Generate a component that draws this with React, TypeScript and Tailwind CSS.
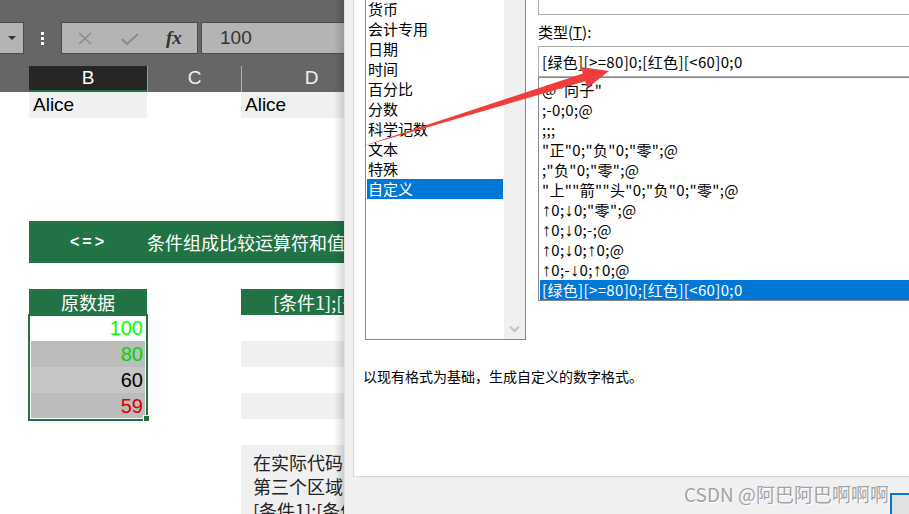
import React from "react";

const cjk = "font-['Noto_Sans_CJK_SC',sans-serif]";
const sheet = "font-['Liberation_Sans','Noto_Sans_CJK_SC',sans-serif]";

const categories = ["货币", "会计专用", "日期", "时间", "百分比", "分数", "科学记数", "文本", "特殊", "自定义"];

const formats = [
  '@"向子"',
  ";-0;0;@",
  ";;;",
  '"正"0;"负"0;"零";@',
  ';"负"0;"零";@',
  '"上""箭""头"0;"负"0;"零";@',
  '↑0;↓0;"零";@',
  "↑0;↓0;-;@",
  "↑0;↓0;↑0;@",
  "↑0;-↓0;↑0;@",
  "[绿色][>=80]0;[红色][<60]0;0",
];

// 箭头用窄字形，其余走思源黑体
function FormatText({ text }: { text: string }) {
  return (
    <>
      {text.split(/([↑↓])/).map((part, i) =>
        part === "↑" || part === "↓" ? (
          <span key={i} className="font-['Liberation_Sans',sans-serif] text-[18px] leading-none">
            {part}
          </span>
        ) : (
          <React.Fragment key={i}>{part}</React.Fragment>
        )
      )}
    </>
  );
}

function FormulaBar() {
  return (
    <div className="flex h-[66px] shrink-0 items-start bg-[#666666] pt-[22px]">
      <div className="flex h-[32px] w-[24px] shrink-0 items-center justify-center border border-l-0 border-[#4a4a4a] bg-[#b4b4b4]">
        <div className="h-0 w-0 border-x-[4px] border-t-[4px] border-x-transparent border-t-[#333]" />
      </div>
      <div className="flex w-[37px] shrink-0 flex-col items-center gap-[2px] pt-[10px]">
        <div className="h-[3px] w-[3px] bg-white" />
        <div className="h-[3px] w-[3px] bg-white" />
        <div className="h-[3px] w-[3px] bg-white" />
      </div>
      <div className="relative h-[32px] w-[137px] shrink-0 border border-[#4a4a4a] bg-[#b4b4b4]">
        <svg className="absolute left-[15px] top-[9px]" width="16" height="13" viewBox="0 0 16 13">
          <path d="M2 1 L14 12 M14 1 L2 12" stroke="#8a8a8a" strokeWidth="1.6" fill="none" />
        </svg>
        <svg className="absolute left-[58px] top-[9px]" width="20" height="14" viewBox="0 0 20 14">
          <path d="M2 7 L7 12 L18 2" stroke="#8a8a8a" strokeWidth="2" fill="none" />
        </svg>
        <span className="absolute left-[104px] top-[2px] font-['Liberation_Serif',serif] text-[19px] font-bold italic leading-[26px] text-[#333]">
          fx
        </span>
      </div>
      <div className={`ml-[3px] h-[32px] flex-1 border border-r-0 border-[#4a4a4a] bg-[#b4b4b4] pl-[18px] text-[19px] leading-[30px] text-[#333] ${sheet}`}>
        100
      </div>
    </div>
  );
}

function ColumnHeaders() {
  return (
    <div className={`flex h-[26px] shrink-0 bg-[#666666] text-[19px] leading-[24px] ${sheet}`}>
      <div className="w-[29px] shrink-0" />
      <div className="w-[118px] shrink-0 border-b-2 border-[#217346] bg-[#262626] text-center text-white">B</div>
      <div className="w-[94px] shrink-0 border-l border-[#9a9a9a] text-center text-[#f2f2f2]">C</div>
      <div className="w-[140px] shrink-0 border-l border-[#b0b0b0] text-center text-[#f2f2f2]">D</div>
    </div>
  );
}

function SheetBody() {
  return (
    <div className={`relative flex-1 bg-white ${sheet}`}>
      {/* 第1行 */}
      <div className="flex h-[26px] text-[19px] leading-[26px] text-black">
        <div className="w-[29px] shrink-0" />
        <div className="w-[118px] shrink-0 bg-[#f0f0f0] pl-[4px]">Alice</div>
        <div className="w-[94px] shrink-0" />
        <div className="w-[140px] shrink-0 bg-[#f0f0f0] pl-[4px]">Alice</div>
      </div>
      <div className="h-[103px]" />

      {/* 标题条 */}
      <div className={`ml-[29px] flex h-[42px] w-[400px] items-center bg-[#217346] text-white ${cjk}`}>
        <span className="ml-[41px] font-['Liberation_Sans',sans-serif] text-[16px] font-bold tracking-[3px]">&lt;=&gt;</span>
        <span className="ml-[40px] whitespace-nowrap text-[18px]">条件组成比较运算符和值</span>
      </div>
      <div className="h-[26px]" />

      {/* 表头 */}
      <div className={`flex h-[26px] text-[18px] leading-[26px] text-white ${cjk}`}>
        <div className="w-[29px] shrink-0" />
        <div className="w-[118px] shrink-0 bg-[#217346] text-center">原数据</div>
        <div className="w-[94px] shrink-0" />
        <div className="w-[140px] shrink-0 whitespace-nowrap bg-[#217346] pl-[32px]">[条件1];[条件2]</div>
      </div>

      {[
        { v: "100", bg: "bg-white", color: "text-[#00ff00]", d: "bg-white" },
        { v: "80", bg: "bg-[#bcbcbc]", color: "text-[#00d400]", d: "bg-[#f0f0f0]" },
        { v: "60", bg: "bg-[#c6c6c6]", color: "text-black", d: "bg-white" },
        { v: "59", bg: "bg-[#bcbcbc]", color: "text-[#d40000]", d: "bg-[#f0f0f0]" },
      ].map((r) => (
        <div key={r.v} className="flex h-[26px] text-[20px] leading-[26px]">
          <div className="w-[29px] shrink-0" />
          <div className={`w-[118px] shrink-0 pr-[4px] text-right ${r.bg} ${r.color}`}>{r.v}</div>
          <div className="w-[94px] shrink-0" />
          <div className={`w-[140px] shrink-0 ${r.d}`} />
        </div>
      ))}
      <div className="h-[26px]" />

      {/* 说明文字 */}
      <div className="flex">
        <div className="w-[241px] shrink-0" />
        <div className={`h-[80px] w-[140px] shrink-0 overflow-hidden bg-[#f0f0f0] pl-[12px] pt-[5px] text-[18px] leading-[24px] text-[#222] ${cjk}`}>
          <div className="whitespace-nowrap">在实际代码中</div>
          <div className="whitespace-nowrap">第三个区域的</div>
          <div className="whitespace-nowrap">[条件1]:[条件2]</div>
        </div>
      </div>

      {/* 选区 */}
      <div className="absolute left-[28px] top-[222px] h-[107px] w-[120px] border-2 border-[#217346] shadow-[inset_0_0_0_1px_#fff]" />
      <div className="absolute left-[143px] top-[323px] h-[7px] w-[7px] border border-white bg-[#217346]" />
    </div>
  );
}

function Spreadsheet() {
  return (
    <div className="relative flex w-[344px] shrink-0 flex-col overflow-hidden">
      <FormulaBar />
      <ColumnHeaders />
      <SheetBody />
      <div className="absolute right-0 top-0 h-full w-[10px] bg-gradient-to-r from-transparent to-black/15" />
    </div>
  );
}

function FormatDialog() {
  return (
    <div className={`flex min-w-0 flex-1 flex-col bg-[#f0f0f0] text-black ${cjk}`}>
      <div className="ml-[8px] h-[477px] shrink-0 overflow-hidden border-b border-l border-[#d9d9d9] bg-white">
        <div className="flex">
          {/* 分类 */}
          <div className="ml-[11px] -mt-[2px] flex h-[342px] w-[161px] shrink-0 border border-[#828790]">
            <div className="w-[138px] px-[1px] text-[15px] leading-[20px]">
              {categories.map((c) => (
                <div key={c} className={`h-[20px] pl-[1px] ${c === "自定义" ? "bg-[#0078d7] text-white" : ""}`}>
                  {c}
                </div>
              ))}
            </div>
            <div className="relative w-[21px] bg-[#f0f0f0]">
              <svg className="absolute bottom-[6px] left-[5px]" width="11" height="8" viewBox="0 0 11 8">
                <path d="M1 1.5 L5.5 6 L10 1.5" stroke="#c2c2c2" strokeWidth="2" fill="none" />
              </svg>
            </div>
          </div>

          {/* 类型 */}
          <div className="ml-[12px] min-w-0 flex-1">
            <div className="h-[15px] overflow-hidden border-b border-l border-[#abadb3]">
              <div className="-mt-[16px] pl-[13px] text-[15px] leading-[20px] text-[#333]">100</div>
            </div>
            <div className="mt-[7px] h-[20px] text-[15px] leading-[20px]">
              类型(<span className="underline">T</span>):
            </div>
            <div className="mt-[4px] h-[31px] whitespace-nowrap border border-r-0 border-[#abadb3] pl-[3px] text-[15px] leading-[29px] tracking-[0.35px]">
              [绿色][&gt;=80]0;[红色][&lt;60]0;0
            </div>
            <div className="h-[224px] border border-r-0 border-[#828790] pl-[1px] pt-[2px] text-[15px] leading-[20px] tracking-[0.35px]">
              {formats.map((f, i) => (
                <div
                  key={f}
                  className={`h-[20px] whitespace-nowrap pl-[2px] ${i === formats.length - 1 ? "bg-[#0078d7] text-white" : ""}`}
                >
                  <FormatText text={f} />
                </div>
              ))}
            </div>
          </div>
        </div>
        <p className="mt-[26px] pl-[9px] text-[14px] leading-[20px]">以现有格式为基础，生成自定义的数字格式。</p>
      </div>

      <div className="relative flex-1">
        <div className="absolute left-[339px] top-[6px] whitespace-nowrap text-[19px] leading-[22px] text-[#a3a3a3] [text-shadow:1px_1px_0_#fff]">
          CSDN @阿巴阿巴啊啊啊
        </div>
        <div className="absolute left-[545px] top-[16px] h-[30px] w-[40px] border-2 border-[#0078d7] bg-[#e1e1e1]" />
      </div>
    </div>
  );
}

export default function App() {
  return (
    <div className="relative flex h-[514px] w-[909px] overflow-hidden bg-white">
      <Spreadsheet />
      <div className="w-[1px] shrink-0 bg-[#e4e4e4]" />
      <FormatDialog />
      <svg className="pointer-events-none absolute inset-0" width="909" height="514" viewBox="0 0 909 514">
        <polygon
          points="360,147 582.9,73.6 580.8,66.9 609,71 587.4,87.9 585.3,81.2"
          fill="#ef3d3d"
        />
      </svg>
    </div>
  );
}
